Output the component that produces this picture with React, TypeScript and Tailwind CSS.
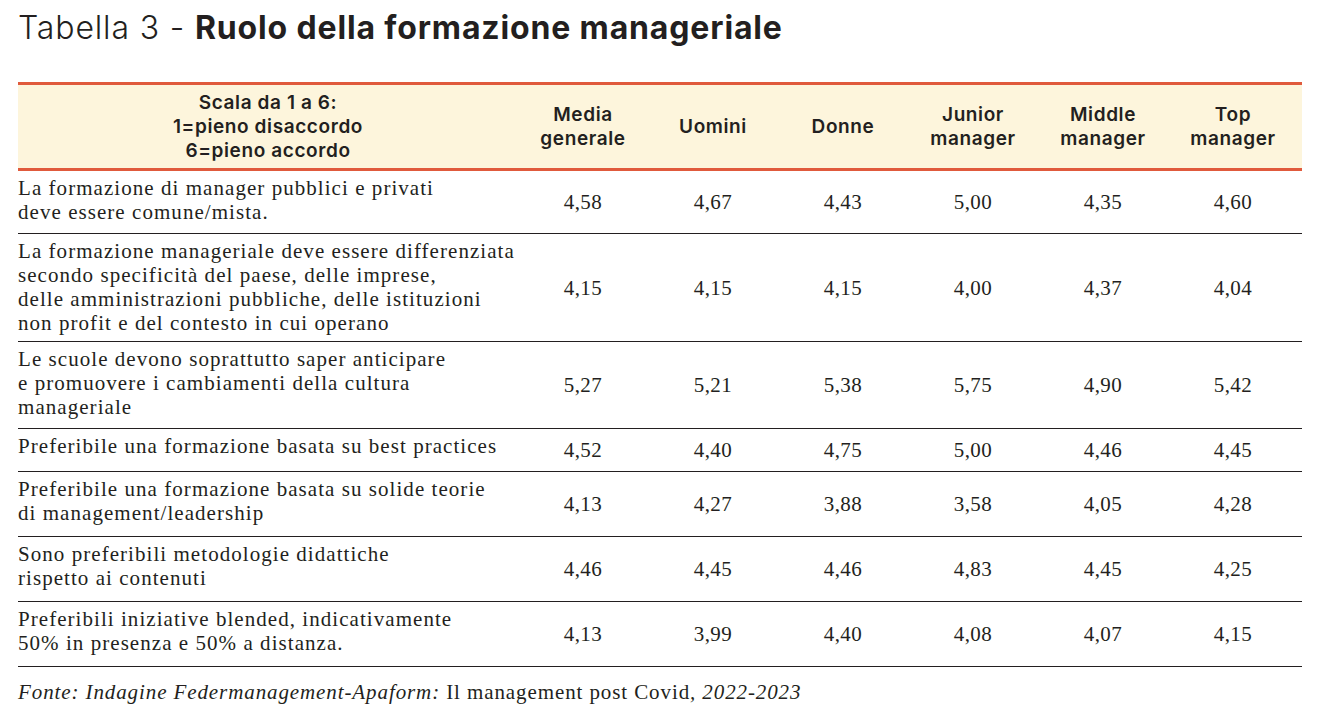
import React from "react";

type Row = { lines: string[]; vals: string[]; h: string };

const rows: Row[] = [
  {
    lines: ["La formazione di manager pubblici e privati", "deve essere comune/mista."],
    vals: ["4,58", "4,67", "4,43", "5,00", "4,35", "4,60"],
    h: "h-[63px]",
  },
  {
    lines: [
      "La formazione manageriale deve essere differenziata",
      "secondo specificità del paese, delle imprese,",
      "delle amministrazioni pubbliche, delle istituzioni",
      "non profit e del contesto in cui operano",
    ],
    vals: ["4,15", "4,15", "4,15", "4,00", "4,37", "4,04"],
    h: "h-[108px]",
  },
  {
    lines: [
      "Le scuole devono soprattutto saper anticipare",
      "e promuovere i cambiamenti della cultura",
      "manageriale",
    ],
    vals: ["5,27", "5,21", "5,38", "5,75", "4,90", "5,42"],
    h: "h-[87px]",
  },
  {
    lines: ["Preferibile una formazione basata su best practices"],
    vals: ["4,52", "4,40", "4,75", "5,00", "4,46", "4,45"],
    h: "h-[43px]",
  },
  {
    lines: ["Preferibile una formazione basata su solide teorie", "di management/leadership"],
    vals: ["4,13", "4,27", "3,88", "3,58", "4,05", "4,28"],
    h: "h-[65px]",
  },
  {
    lines: ["Sono preferibili metodologie didattiche", "rispetto ai contenuti"],
    vals: ["4,46", "4,45", "4,46", "4,83", "4,45", "4,25"],
    h: "h-[65px]",
  },
  {
    lines: ["Preferibili iniziative blended, indicativamente", "50% in presenza e 50% a distanza."],
    vals: ["4,13", "3,99", "4,40", "4,08", "4,07", "4,15"],
    h: "h-[65px]",
  },
];

const headers: string[][] = [
  ["Media", "generale"],
  ["Uomini"],
  ["Donne"],
  ["Junior", "manager"],
  ["Middle", "manager"],
  ["Top", "manager"],
];

const sans = "font-['Inter','Roboto',sans-serif]";
const serif = "font-['Liberation_Serif','Times_New_Roman',serif]";

export default function App() {
  return (
    <div className="w-[1318px] h-[720px] bg-white text-[#231f20] overflow-hidden">
      <h1 className={`${sans} pl-[18px] pt-[10px] text-[32px] leading-[36px] tracking-[0.85px]`}>
        <span className="font-light">Tabella 3 - </span>
        <span className="font-bold">Ruolo della formazione manageriale</span>
      </h1>

      <div className="ml-[18px] mt-[36px] w-[1284px]">
        <div
          className={`${sans} flex h-[89px] items-center border-y-[3px] border-[#e05a3c] bg-[#fdf5dc] text-[19px] font-semibold leading-[24px] tracking-[0.6px]`}
        >
          <div className="w-[500px] text-center">
            <div>Scala da 1 a 6:</div>
            <div>1=pieno disaccordo</div>
            <div>6=pieno accordo</div>
          </div>
          {headers.map((h, i) => (
            <div key={i} className="w-[130px] text-center">
              {h.map((t, j) => (
                <div key={j}>{t}</div>
              ))}
            </div>
          ))}
        </div>

        {rows.map((r, i) => (
          <div
            key={i}
            className={`${serif} flex ${r.h} border-b border-[#231f20] text-[21px] leading-[24px] tracking-[1.05px]`}
          >
            <div className="w-[500px] pt-[5px]">
              {r.lines.map((l, j) => (
                <div key={j}>{l}</div>
              ))}
            </div>
            {r.vals.map((v, j) => (
              <div key={j} className="flex w-[130px] items-center justify-center tracking-[0.4px]">
                {v}
              </div>
            ))}
          </div>
        ))}

        <div className={`${serif} mt-[13px] text-[21px] leading-[24px] tracking-[0.9px]`}>
          <span className="italic">Fonte: Indagine Federmanagement-Apaform: </span>
          <span>Il management post Covid</span>
          <span className="italic">, 2022-2023</span>
        </div>
      </div>
    </div>
  );
}
